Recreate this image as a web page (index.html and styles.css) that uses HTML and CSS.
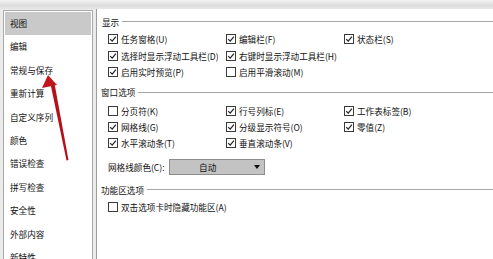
FILE: index.html
```html
<!DOCTYPE html>
<html lang="zh-CN">
  <head>
    <meta charset="UTF-8" />
    <title>选项</title>
    <link rel="stylesheet" href="styles.css">
  </head>
  <body>
    <div class="topbar"></div>
    <div class="main">
      <ul class="nav">
        <li class="active">视图</li>
        <li>编辑</li>
        <li>常规与保存</li>
        <li>重新计算</li>
        <li>自定义序列</li>
        <li>颜色</li>
        <li>错误检查</li>
        <li>拼写检查</li>
        <li>安全性</li>
        <li>外部内容</li>
        <li>新特性</li>
      </ul>

      <div class="panel">
        <div class="group-title first"><span>显示</span></div>
        <div class="rows">
          <label class="cb on">任务窗格(U)</label>
          <label class="cb on">编辑栏(F)</label>
          <label class="cb on">状态栏(S)</label>
          <label class="cb on">选择时显示浮动工具栏(D)</label>
          <label class="cb on">右键时显示浮动工具栏(H)</label>
          <span></span>
          <label class="cb on">启用实时预览(P)</label>
          <label class="cb">启用平滑滚动(M)</label>
        </div>

        <div class="group-title second"><span>窗口选项</span></div>
        <div class="rows tight">
          <label class="cb">分页符(K)</label>
          <label class="cb on">行号列标(E)</label>
          <label class="cb on">工作表标签(B)</label>
          <label class="cb on">网格线(G)</label>
          <label class="cb on">分级显示符号(O)</label>
          <label class="cb on">零值(Z)</label>
          <label class="cb on">水平滚动条(T)</label>
          <label class="cb on">垂直滚动条(V)</label>
        </div>

        <div class="color-row">
          <span>网格线颜色(C):</span>
          <div class="dropdown">
            <span class="value">自动</span>
            <span class="caret"></span>
          </div>
        </div>

        <div class="group-title third"><span>功能区选项</span></div>
        <div class="rows single">
          <label class="cb">双击选项卡时隐藏功能区(A)</label>
        </div>
      </div>
    </div>

    <!-- red arrow drawn over the screenshot -->
    <svg class="arrow" width="493" height="259" viewBox="0 0 493 259">
      <polygon points="50.5,84 54.5,83.5 68.5,160 66.5,160.5" fill="#b3121a" />
      <polygon points="48,75 42,88 57,85" fill="#c0161d" />
    </svg>
  </body>
</html>
```

FILE: styles.css
```css
body {
  font-family: "Noto Sans CJK SC", "Noto Sans", sans-serif;
  font-size: 8.6px;
  color: #111;
  margin: 0;
  padding: 0;
  width: 493px;
  height: 259px;
  overflow: hidden;
  background-color: #ebebeb;
  position: relative;
}

.topbar {
  height: 9px;
  background: linear-gradient(#f4f4f4, #dcdcdc 60%, #e6e6e6);
}

.main {
  display: flex;
  height: 250px;
}

.nav {
  list-style: none;
  margin: 1px 0 0 3px;
  padding: 1px;
  width: 86px;
  border: 1px solid #a9a9a9;
  border-bottom: none;
  background-color: #fff;
}

.nav li {
  height: 23.4px;
  line-height: 23.4px;
  padding-left: 5px;
  white-space: nowrap;
}

.nav li.active {
  background-color: #c9c9c9;
}

.panel {
  flex: 1;
  margin-left: 3px;
  border-left: 1px solid #9d9d9d;
  background-color: #fff;
  padding-left: 4px;
}

.group-title {
  display: flex;
  align-items: center;
  height: 14px;
}

.group-title::after {
  content: "";
  flex: 1;
  border-top: 1px solid #a6a6a6;
  margin-left: 3px;
}

.group-title.first {
  margin-top: 5.5px;
  padding-left: 1px;
}

.group-title.second {
  margin-top: 4.8px;
}

.group-title.third {
  margin-top: 8.3px;
}

.rows {
  display: grid;
  grid-template-columns: 118px 118px 118px;
  grid-auto-rows: 16.5px;
  padding-left: 7px;
  margin-top: 2.5px;
}

.rows.tight {
  grid-auto-rows: 16.2px;
  margin-top: 3.3px;
}

.rows.single {
  margin-top: 2px;
}

.cb {
  display: flex;
  align-items: center;
  white-space: nowrap;
}

.cb::before {
  content: "";
  width: 8px;
  height: 8px;
  border: 1px solid #3a3a3a;
  background-color: #fff;
  margin-right: 3px;
  flex: none;
}

.cb.on::before {
  background: #fff url("data:image/svg+xml,%3Csvg xmlns='http://www.w3.org/2000/svg' width='8' height='8' viewBox='0 0 8 8'%3E%3Cpath d='M1.2 4.2 L3.2 6.2 L6.9 1.6' fill='none' stroke='%23222' stroke-width='1.2'/%3E%3C/svg%3E") no-repeat center;
}

.color-row {
  display: flex;
  align-items: center;
  height: 16px;
  margin-top: 7.5px;
  padding-left: 7px;
}

.dropdown {
  position: relative;
  display: flex;
  align-items: center;
  width: 94px;
  height: 14px;
  margin-left: 4px;
  background-color: #c3c3c3;
  border: 1px solid #8c8c8c;
}

.dropdown .value {
  flex: 1;
  text-align: center;
  padding-right: 8px;
}

.dropdown .caret {
  width: 0;
  height: 0;
  border-left: 3px solid transparent;
  border-right: 3px solid transparent;
  border-top: 4px solid #111;
  margin-right: 4px;
}

.arrow {
  position: absolute;
  left: 0;
  top: 0;
  pointer-events: none;
}
```
